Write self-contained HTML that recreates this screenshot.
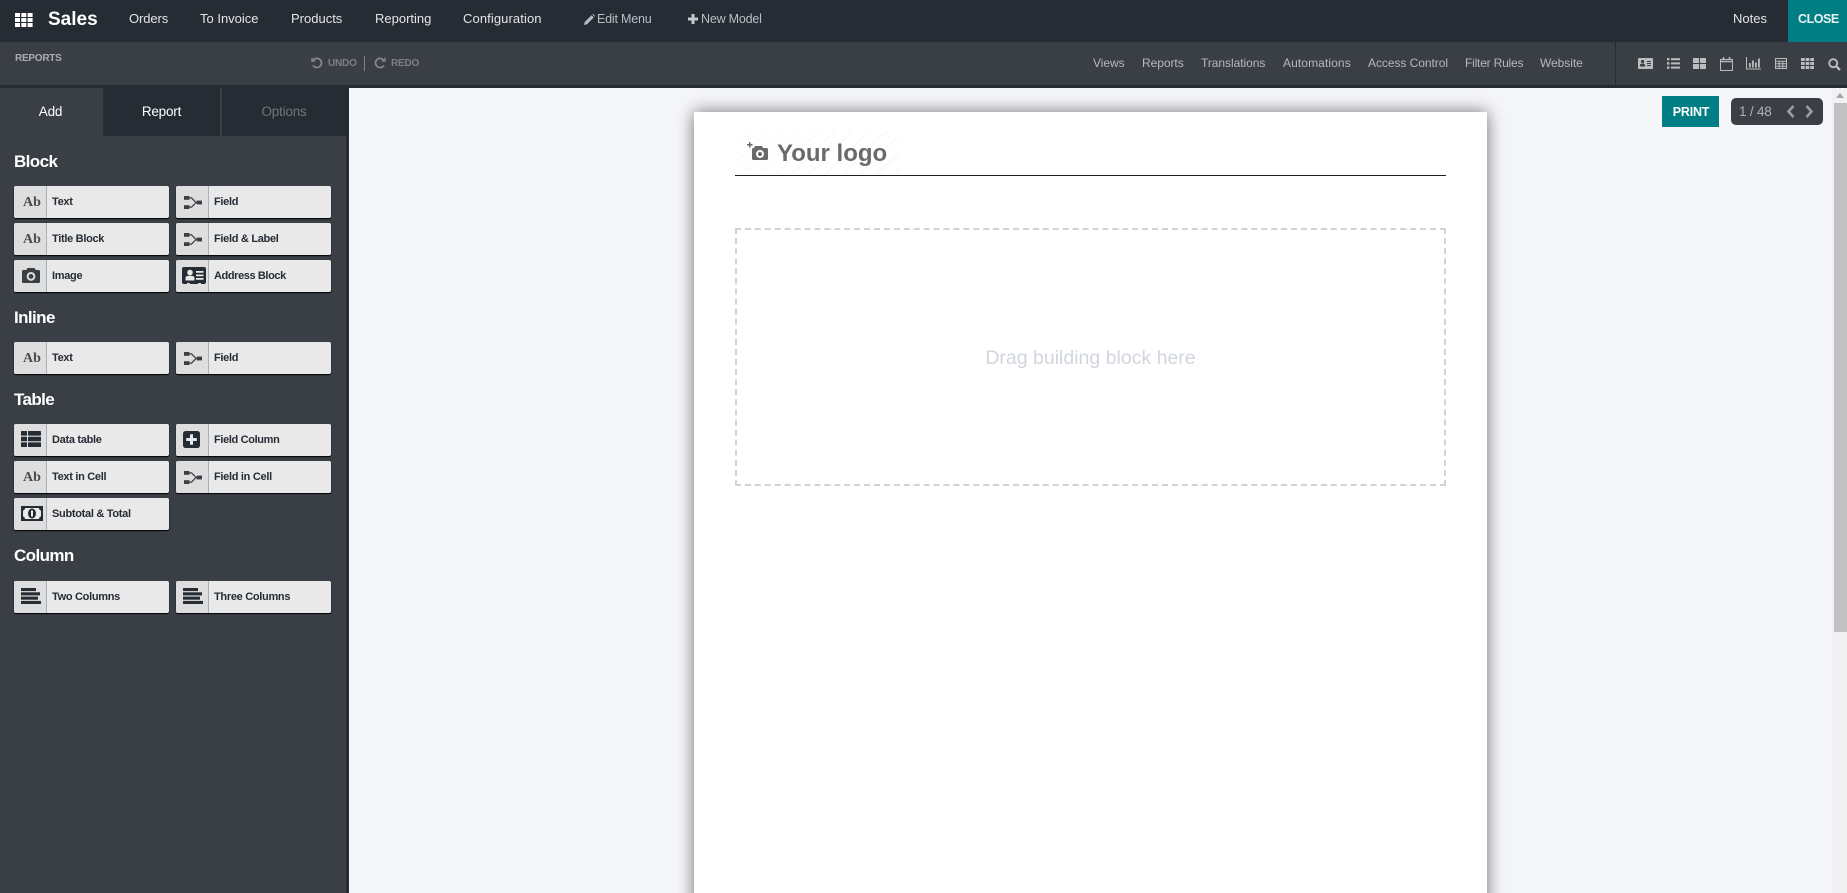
<!DOCTYPE html>
<html><head><meta charset="utf-8"><title>Sales</title>
<style>
*{box-sizing:border-box}
html,body{margin:0;padding:0;width:1847px;height:893px;overflow:hidden;background:#f5f6fa;font-family:"Liberation Sans",sans-serif}
#root{position:relative;width:1847px;height:893px;overflow:hidden;background:#f5f6fa}
.a,.t{position:absolute}
.t{white-space:nowrap;line-height:16px;height:16px}
#nav{left:0;top:0;width:1847px;height:42px;background:#262c34}
#bar{left:0;top:42px;width:1847px;height:43px;background:#3a3f46}
#barb{left:0;top:85px;width:1847px;height:3px;background:#262c34}
#side{left:0;top:88px;width:346px;height:805px;background:#3a3f46}
#sideb{left:346px;top:88px;width:3px;height:805px;background:#262c34}
.n{font-size:13px;color:#e4e5e7;top:11px;letter-spacing:0}
.m{font-size:12px;color:#b6b8bb;top:55px;letter-spacing:-.05px}
.tab{top:88px;height:48px;line-height:48px;text-align:center;font-size:13.5px;color:#fff;letter-spacing:-.2px}
.h{left:14px;font-size:17px;font-weight:bold;color:#fff;letter-spacing:-.6px;line-height:20px}
.b{width:155px;height:32px;background:#e9e9e9;border-radius:2px;box-shadow:0 1px 1px #000;overflow:hidden}
.b i{position:absolute;left:0;top:0;width:33px;height:32px;background:#dedede;border-right:1px solid #a3b1c2}
.b span{position:absolute;left:38px;top:9px;font-size:11px;font-weight:bold;color:#262c34;line-height:14px;white-space:nowrap;letter-spacing:-.3px}
.b b{position:absolute;left:9px;top:6.5px;font:bold 14px/20px "Liberation Serif",serif;color:#4a4a4a}
.b svg{position:absolute}
svg{display:block}
</style></head><body>
<div id="root">
<svg width="0" height="0" style="position:absolute"><defs>
<symbol id="fld" viewBox="0 0 18 13"><rect x="0" y="0" width="5.4" height="3.8" fill="#3a3f46"/><rect x="0" y="9.2" width="5.4" height="3.8" fill="#3a3f46"/><rect x="12.6" y="4.6" width="5.4" height="3.8" fill="#3a3f46"/><path d="M5 1.9H7.5L12 6.5 7.5 11.1H5" fill="none" stroke="#3a3f46" stroke-width="1.2"/></symbol>
</defs></svg>

<div class="a" id="nav"></div>
<div class="a" id="bar"></div>
<div class="a" id="barb"></div>
<div class="a" id="side"></div>
<div class="a" id="sideb"></div>

<svg class="a" style="left:15px;top:13px" width="18" height="14" viewBox="0 0 18 14" fill="#fff"><rect x="0" y="0" width="5" height="4"/><rect x="6.3" y="0" width="5" height="4"/><rect x="12.6" y="0" width="5" height="4"/><rect x="0" y="5" width="5" height="4"/><rect x="6.3" y="5" width="5" height="4"/><rect x="12.6" y="5" width="5" height="4"/><rect x="0" y="10" width="5" height="4"/><rect x="6.3" y="10" width="5" height="4"/><rect x="12.6" y="10" width="5" height="4"/></svg>
<div class="t" style="left:48px;top:11px;font-size:19px;font-weight:bold;color:#fff;letter-spacing:0;line-height:18px;height:18px">Sales</div>
<div class="t n" style="left:129px;letter-spacing:-.1px">Orders</div>
<div class="t n" style="left:200px">To Invoice</div>
<div class="t n" style="left:291px">Products</div>
<div class="t n" style="left:375px">Reporting</div>
<div class="t n" style="left:463px;letter-spacing:.1px">Configuration</div>
<svg class="a" style="left:584px;top:14px" width="11" height="11" viewBox="0 0 11 11" fill="#b6bcc4"><path d="M0 11 .7 8 7.5 1.2 9.8 3.5 3 10.3ZM8.2.5 9 0 11 2 10.5 2.8Z"/></svg>
<div class="t n" style="left:597px;font-size:12.5px;color:#b9bfc6;letter-spacing:-.2px">Edit Menu</div>
<svg class="a" style="left:688px;top:14px" width="10" height="10" viewBox="0 0 10 10" fill="#c4c9cf"><path d="M3.5 0H6.5V3.5H10V6.5H6.5V10H3.5V6.5H0V3.5H3.5Z"/></svg>
<div class="t n" style="left:701px;font-size:12.5px;color:#b9bfc6;letter-spacing:-.2px">New Model</div>
<div class="t n" style="left:1733px">Notes</div>
<div class="a" style="left:1788px;top:0;width:59px;height:42px;background:#017e84"></div>
<div class="t" style="left:1798px;top:11px;font-size:12.5px;font-weight:bold;color:#e9f3f3;letter-spacing:-.45px">CLOSE</div>

<div class="t" style="left:15px;top:51px;font-size:10px;font-weight:bold;color:#a9acb0;letter-spacing:-.25px">REPORTS</div>
<svg class="a" style="left:311px;top:57px" width="12" height="12" viewBox="0 0 12 12" fill="none" stroke="#85888d" stroke-width="1.7"><path d="M2.2 3.2A4.6 4.6 0 1 1 2 8.4"/><path d="M1 .8V4H4.2" stroke-width="1.4"/></svg>
<div class="t" style="left:328px;top:56px;font-size:10px;font-weight:bold;color:#7d8085;letter-spacing:-.2px">UNDO</div>
<div class="a" style="left:364px;top:56px;width:1px;height:15px;background:#7d8085"></div>
<svg class="a" style="left:374px;top:57px" width="12" height="12" viewBox="0 0 12 12" fill="none" stroke="#85888d" stroke-width="1.7"><path d="M9.8 3.2A4.6 4.6 0 1 0 10 8.4"/><path d="M11 .8V4H7.8" stroke-width="1.4"/></svg>
<div class="t" style="left:391px;top:56px;font-size:10px;font-weight:bold;color:#7d8085;letter-spacing:-.2px">REDO</div>

<div class="t m" style="left:1093px">Views</div>
<div class="t m" style="left:1142px">Reports</div>
<div class="t m" style="left:1201px">Translations</div>
<div class="t m" style="left:1283px;letter-spacing:.1px">Automations</div>
<div class="t m" style="left:1368px">Access Control</div>
<div class="t m" style="left:1465px;letter-spacing:-.2px">Filter Rules</div>
<div class="t m" style="left:1540px">Website</div>
<div class="a" style="left:1615px;top:42px;width:1px;height:43px;background:#262c34"></div>

<svg class="a" style="left:1638px;top:58px" width="15" height="11" viewBox="0 0 15 11" fill="#bcbcbc"><path fill-rule="evenodd" d="M1 0H14A1 1 0 0 1 15 1V10A1 1 0 0 1 14 11H1A1 1 0 0 1 0 10V1A1 1 0 0 1 1 0ZM4.5 2A1.6 1.6 0 1 0 4.6 5.2 1.6 1.6 0 1 0 4.5 2ZM2 8.5H7V7C7 6 6 5.6 4.5 5.6S2 6 2 7ZM9 3V4H13V3ZM9 5V6H13V5ZM9 7V8H13V7Z"/></svg>
<svg class="a" style="left:1667px;top:58px" width="13" height="11" viewBox="0 0 13 11" fill="#bcbcbc"><rect y="0" width="2.4" height="2.4"/><rect y="4.2" width="2.4" height="2.4"/><rect y="8.4" width="2.4" height="2.4"/><rect x="4" y=".2" width="9" height="2"/><rect x="4" y="4.4" width="9" height="2"/><rect x="4" y="8.6" width="9" height="2"/></svg>
<svg class="a" style="left:1693px;top:58px" width="13" height="11" viewBox="0 0 13 11" fill="#bcbcbc"><rect width="6" height="5"/><rect x="7" width="6" height="5"/><rect y="6" width="6" height="5"/><rect x="7" y="6" width="6" height="5"/></svg>
<svg class="a" style="left:1720px;top:57px" width="13" height="14" viewBox="0 0 13 14" fill="none" stroke="#bcbcbc"><rect x=".5" y="2.5" width="12" height="11"/><path d="M.5 4.5H12.5" stroke-width="1.4"/><path d="M3.5 0V3M9.5 0V3" stroke-width="1.6"/></svg>
<svg class="a" style="left:1746px;top:57px" width="15" height="13" viewBox="0 0 15 13" fill="#bcbcbc"><path d="M0 0H1V11.5H15V12.5H0Z"/><rect x="3" y="6" width="1.8" height="4.5"/><rect x="6" y="3.5" width="1.8" height="7"/><rect x="9" y="5.5" width="1.8" height="5"/><rect x="12" y="1.5" width="1.8" height="9"/></svg>
<svg class="a" style="left:1775px;top:58px" width="12" height="11" viewBox="0 0 12 11" fill="none" stroke="#bcbcbc"><rect x=".5" y=".5" width="11" height="10"/><path d="M0 3.2H12M0 5.8H12M0 8.2H12M4.2 3V11M7.8 3V11"/></svg>
<svg class="a" style="left:1801px;top:58px" width="13" height="11" viewBox="0 0 13 11" fill="#bcbcbc"><rect width="3.7" height="3"/><rect x="4.65" width="3.7" height="3"/><rect x="9.3" width="3.7" height="3"/><rect y="4" width="3.7" height="3"/><rect x="4.65" y="4" width="3.7" height="3"/><rect x="9.3" y="4" width="3.7" height="3"/><rect y="8" width="3.7" height="3"/><rect x="4.65" y="8" width="3.7" height="3"/><rect x="9.3" y="8" width="3.7" height="3"/></svg>
<svg class="a" style="left:1828px;top:58px" width="13" height="13" viewBox="0 0 13 13" fill="none" stroke="#bcbcbc"><circle cx="5.2" cy="5.2" r="4" stroke-width="1.9"/><path d="M8.2 8.2 12 12" stroke-width="2.4"/></svg>

<div class="a tab" style="left:0;width:101px;background:#3a3f46;box-shadow:2px 0 0 #3a3f46">Add</div>
<div class="a tab" style="left:103px;width:118px;background:#262c34;border-right:1px solid #3a3f46">Report</div>
<div class="a tab" style="left:222px;width:124px;background:#262c34;color:#71757b">Options</div>
<div class="a" style="left:346px;top:88px;width:3px;height:48px;background:#262c34"></div>

<div class="a h" style="top:152px">Block</div>
<div class="a b" style="left:14px;top:186px"><i></i><b>Ab</b><span>Text</span></div>
<div class="a b" style="left:176px;top:186px"><i></i><svg style="left:7.5px;top:10px" width="18" height="13"><use href="#fld"/></svg><span>Field</span></div>
<div class="a b" style="left:14px;top:223px"><i></i><b>Ab</b><span>Title Block</span></div>
<div class="a b" style="left:176px;top:223px"><i></i><svg style="left:7.5px;top:10px" width="18" height="13"><use href="#fld"/></svg><span>Field &amp; Label</span></div>
<div class="a b" style="left:14px;top:260px"><i></i><svg style="left:8px;top:8px" width="18" height="15" viewBox="0 0 18 15"><path fill="#3a3f46" fill-rule="evenodd" d="M5.5 0H12.5L13.8 2H16.5A1.5 1.5 0 0 1 18 3.5V13.5A1.5 1.5 0 0 1 16.5 15H1.5A1.5 1.5 0 0 1 0 13.5V3.5A1.5 1.5 0 0 1 1.5 2H4.2ZM9 4A4.4 4.4 0 1 0 9 12.8 4.4 4.4 0 1 0 9 4ZM9 6A2.4 2.4 0 1 1 9 10.8 2.4 2.4 0 1 1 9 6Z"/></svg><span>Image</span></div>
<div class="a b" style="left:176px;top:260px"><i></i><svg style="left:6px;top:7px" width="24" height="18" viewBox="0 0 24 18"><path fill="#262c34" d="M2 0H22A2 2 0 0 1 24 2V15A2 2 0 0 1 22 17H19V16H16V17H8V16H5V17H2A2 2 0 0 1 0 15V2A2 2 0 0 1 2 0Z"/><circle cx="8" cy="5.5" r="2.8" fill="#e9e9e9"/><path fill="#e9e9e9" d="M3.5 13.5V11C3.5 9.5 5 8.8 8 8.8S12.5 9.5 12.5 11V13.5Z"/><path fill="#e9e9e9" d="M14 4H21.5V5.7H14ZM14 7.5H21.5V9.2H14ZM14 11H21.5V12.7H14Z"/></svg><span style="letter-spacing:-.4px">Address Block</span></div>

<div class="a h" style="top:308px">Inline</div>
<div class="a b" style="left:14px;top:342px"><i></i><b>Ab</b><span>Text</span></div>
<div class="a b" style="left:176px;top:342px"><i></i><svg style="left:7.5px;top:10px" width="18" height="13"><use href="#fld"/></svg><span>Field</span></div>

<div class="a h" style="top:390px">Table</div>
<div class="a b" style="left:14px;top:424px"><i></i><svg style="left:7px;top:7px" width="20" height="16" viewBox="0 0 20 16" fill="#262c34"><rect width="6" height="4.6" rx=".6"/><rect x="7" width="13" height="4.6" rx=".6"/><rect y="5.7" width="6" height="4.6" rx=".6"/><rect x="7" y="5.7" width="13" height="4.6" rx=".6"/><rect y="11.4" width="6" height="4.6" rx=".6"/><rect x="7" y="11.4" width="13" height="4.6" rx=".6"/></svg><span>Data table</span></div>
<div class="a b" style="left:176px;top:424px"><i></i><svg style="left:7px;top:7px" width="17" height="17" viewBox="0 0 17 17"><rect width="17" height="17" rx="2.6" fill="#262c34"/><path fill="#e9e9e9" d="M7 3.2H10V7H13.8V10H10V13.8H7V10H3.2V7H7Z"/></svg><span style="letter-spacing:-.35px">Field Column</span></div>
<div class="a b" style="left:14px;top:461px"><i></i><b>Ab</b><span>Text in Cell</span></div>
<div class="a b" style="left:176px;top:461px"><i></i><svg style="left:7.5px;top:10px" width="18" height="13"><use href="#fld"/></svg><span>Field in Cell</span></div>
<div class="a b" style="left:14px;top:498px"><i></i><svg style="left:7px;top:8px" width="22" height="15" viewBox="0 0 22 15"><rect width="22" height="15" fill="#262c34"/><path fill="#e9e9e9" d="M4 2H18C18 3.5 19 4.5 20 4.5V10.5C19 10.5 18 11.5 18 13H4C4 11.5 3 10.5 2 10.5V4.5C3 4.5 4 3.5 4 2Z"/><ellipse cx="11" cy="7.5" rx="4" ry="5" fill="#262c34"/><rect x="10" y="4.5" width="2" height="6" fill="#e9e9e9"/></svg><span>Subtotal &amp; Total</span></div>

<div class="a h" style="top:546px">Column</div>
<div class="a b" style="left:14px;top:581px"><i></i><svg style="left:7px;top:7px" width="20" height="16" viewBox="0 0 20 16" fill="#262c34"><rect width="15" height="3.1"/><rect y="4.3" width="19" height="3.1"/><rect y="8.6" width="17" height="3.1"/><rect y="12.9" width="20" height="3.1"/></svg><span>Two Columns</span></div>
<div class="a b" style="left:176px;top:581px"><i></i><svg style="left:7px;top:7px" width="20" height="16" viewBox="0 0 20 16" fill="#262c34"><rect width="15" height="3.1"/><rect y="4.3" width="19" height="3.1"/><rect y="8.6" width="17" height="3.1"/><rect y="12.9" width="20" height="3.1"/></svg><span>Three Columns</span></div>

<div class="a" style="left:694px;top:112px;width:793px;height:800px;background:#fff;box-shadow:0 0 16px rgba(0,0,0,.55)"></div>
<div class="a" style="left:735px;top:131px;width:165px;height:43px;background:repeating-linear-gradient(135deg,#fff 0,#fff 10px,#fafafa 10px,#fafafa 12px)"></div>
<svg class="a" style="left:747px;top:142px" width="21" height="18" viewBox="0 0 21 18" fill="#6a6a6a"><path fill-rule="evenodd" d="M8 4H15L16 6H19.5A1.5 1.5 0 0 1 21 7.5V16.5A1.5 1.5 0 0 1 19.5 18H6.5A1.5 1.5 0 0 1 5 16.5V7.5A1.5 1.5 0 0 1 6.5 6H7ZM13 8A4 4 0 1 0 13 16 4 4 0 1 0 13 8ZM13 10A2 2 0 1 1 13 14 2 2 0 1 1 13 10Z"/><path d="M2 0H3.5V2H5.5V3.5H3.5V5.5H2V3.5H0V2H2Z"/></svg>
<div class="t" style="left:777px;top:139px;height:30px;line-height:30px;font-size:24px;font-weight:bold;color:#6a6a6a">Your logo</div>
<div class="a" style="left:735px;top:174.5px;width:711px;height:1.5px;background:#1c2026"></div>
<div class="a" style="left:735px;top:228px;width:711px;height:258px;border:2px dashed #ced4da"></div>
<div class="a" style="left:735px;top:346px;width:711px;height:24px;line-height:24px;text-align:center;font-size:19.5px;color:#d1d6de">Drag building block here</div>

<div class="a" style="left:1662px;top:96px;width:57px;height:31px;background:#017e84;color:#fff;font-size:12.5px;font-weight:bold;line-height:32px;text-align:center;letter-spacing:-.2px;padding-left:1px">PRINT</div>
<div class="a" style="left:1731px;top:98px;width:92px;height:27px;background:#3a3f46;border-radius:5px"></div>
<div class="t" style="left:1739px;top:103.5px;font-size:13.5px;color:#b0b2b5;letter-spacing:-.2px">1 / 48</div>
<svg class="a" style="left:1786px;top:105px" width="9" height="13" viewBox="0 0 9 13" fill="none" stroke="#9a9da1" stroke-width="2.6"><path d="M7.5 1 2.5 6.5 7.5 12"/></svg>
<svg class="a" style="left:1805px;top:105px" width="9" height="13" viewBox="0 0 9 13" fill="none" stroke="#9a9da1" stroke-width="2.6"><path d="M1.5 1 6.5 6.5 1.5 12"/></svg>

<div class="a" style="left:1832px;top:88px;width:15px;height:805px;background:#f1f1f1"></div>
<div class="a" style="left:1834px;top:103px;width:13px;height:529px;background:#c1c1c1"></div>
<svg class="a" style="left:1836px;top:93px" width="8" height="5" viewBox="0 0 8 5" fill="#a3a3a3"><path d="M4 0 8 5H0Z"/></svg>
</div>
</body></html>
